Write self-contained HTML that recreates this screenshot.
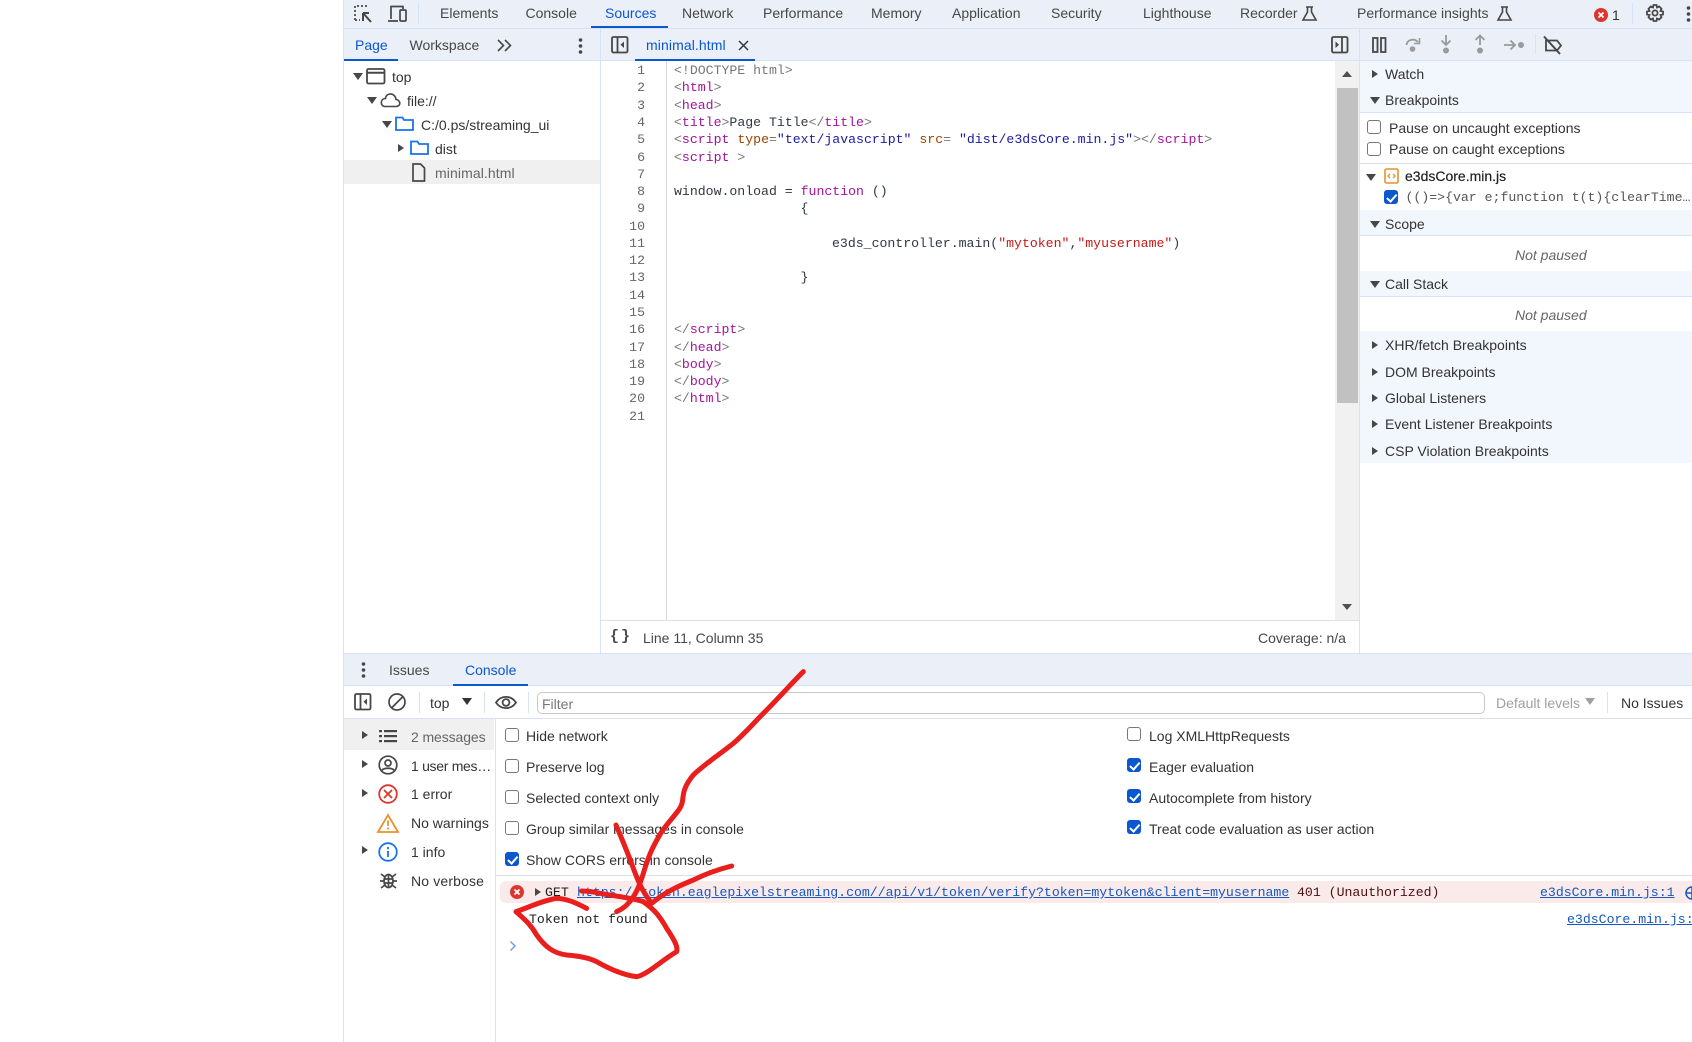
<!DOCTYPE html>
<html><head><meta charset="utf-8"><style>
html,body{margin:0;padding:0;background:#fff;width:1692px;height:1042px;overflow:hidden}
body{position:relative;font:14px/20px "Liberation Sans",sans-serif;color:#474747}
.t,.m,.b,svg,.c{position:absolute}
.t,.m{white-space:pre;height:20px}
.m{font:13.2px/20px "Liberation Mono",monospace;color:#303942}
.b{display:block}
.p{color:#a3139c}.a{color:#994500}.v{color:#1a1aa6}.s{color:#c41a16}.g{color:#777}
.blue{color:#0b57d0}
.r,.d{position:absolute;width:0;height:0}
.r{border-left:6px solid #474747;border-top:4.500px solid transparent;border-bottom:4.500px solid transparent;margin-top:1px}
.d{border-top:7px solid #474747;border-left:5px solid transparent;border-right:5px solid transparent;margin-top:1px}
.c{width:12px;height:12px;border:1.500px solid #777;border-radius:3px;background:#fff}
.c.on{background:#0b57d0;border-color:#0b57d0}
.c.on:after{content:"";position:absolute;left:3.500px;top:.500px;width:3.500px;height:7.500px;border:solid #fff;border-width:0 2px 2px 0;transform:rotate(42deg)}
a{color:#1558c0;text-decoration:underline}
svg{overflow:visible}
</style></head><body>
<!-- backgrounds -->
<div class="b" style="left:344px;top:0;width:1348px;height:28px;background:#ebeff7"></div>
<div class="b" style="left:344px;top:28px;width:1348px;height:1px;background:#d6e2f7"></div>
<div class="b" style="left:344px;top:29px;width:1348px;height:31px;background:#ebeff7"></div>
<div class="b" style="left:344px;top:60px;width:1348px;height:1px;background:#d6e2f7"></div>
<div class="b" style="left:343px;top:0;width:1px;height:1042px;background:#d6e2f7"></div>
<div class="b" style="left:600px;top:29px;width:1px;height:624px;background:#d6e2f7"></div>
<div class="b" style="left:1359px;top:29px;width:1px;height:624px;background:#d6e2f7"></div>
<div class="b" style="left:666px;top:61px;width:1px;height:559px;background:#d8d8d8"></div>
<!-- active tab underlines -->
<div class="b" style="left:591px;top:26px;width:77px;height:2px;background:#0b57d0"></div>
<div class="b" style="left:344px;top:59px;width:54px;height:2px;background:#0b57d0"></div>
<div class="b" style="left:635px;top:59px;width:120px;height:2px;background:#0b57d0"></div>
<!-- main toolbar icons -->
<svg style="left:354px;top:5px" width="19" height="19" fill="none" stroke="#474747" stroke-width="1.700"><path stroke-dasharray="2 2" d="M1 15V1H15"/><path stroke-dasharray="2 2" d="M1 15H6"/><path d="M9 8V16M9 8H15M9 8L17 17" stroke-width="2"/></svg>
<svg style="left:388px;top:5px" width="20" height="18" fill="none" stroke="#474747" stroke-width="1.700"><path d="M3 14V1.500H15V4M0 16H10"/><rect x="12" y="5" width="6" height="11" rx="1"/></svg>
<div class="b" style="left:418px;top:3px;width:1px;height:21px;background:#d6e2f7"></div>
<span class="t" style="left:440px;top:3px">Elements</span>
<span class="t" style="left:525.500px;top:3px">Console</span>
<span class="t blue" style="left:605px;top:3px">Sources</span>
<span class="t" style="left:682px;top:3px">Network</span>
<span class="t" style="left:763px;top:3px">Performance</span>
<span class="t" style="left:871px;top:3px">Memory</span>
<span class="t" style="left:952px;top:3px">Application</span>
<span class="t" style="left:1051px;top:3px">Security</span>
<span class="t" style="left:1143px;top:3px">Lighthouse</span>
<span class="t" style="left:1240px;top:3px">Recorder</span>
<svg style="left:1302px;top:6px" width="15" height="15" fill="none" stroke="#474747" stroke-width="1.600"><path d="M4 1H11M5.500 1V6L1 14H14L9.500 6V1"/></svg>
<span class="t" style="left:1357px;top:3px">Performance insights</span>
<svg style="left:1497px;top:6px" width="15" height="15" fill="none" stroke="#474747" stroke-width="1.600"><path d="M4 1H11M5.500 1V6L1 14H14L9.500 6V1"/></svg>
<svg style="left:1594px;top:8px" width="14" height="14"><circle cx="7" cy="7" r="7" fill="#dc362e"/><path d="M4.500 4.500L9.500 9.500M9.500 4.500L4.500 9.500" stroke="#fff" stroke-width="1.800"/></svg>
<span class="t" style="left:1612px;top:5px;color:#333">1</span>
<div class="b" style="left:1632px;top:3px;width:1px;height:21px;background:#d6e2f7"></div>
<svg style="left:1646px;top:4px" width="18" height="18" fill="none" stroke="#474747" stroke-width="1.800"><circle cx="9" cy="9" r="2.600"/><path d="M7.500 1H10.500L11 3.500L13.200 2.500L15.500 4.800L14.500 7L17 7.500V10.500L14.500 11L15.500 13.200L13.200 15.500L11 14.500L10.500 17H7.500L7 14.500L4.800 15.500L2.500 13.200L3.500 11L1 10.500V7.500L3.500 7L2.500 4.800L4.800 2.500L7 3.500Z"/></svg>
<svg style="left:1686px;top:6px" width="5" height="17" fill="#474747"><circle cx="2.500" cy="2" r="1.800"/><circle cx="2.500" cy="8" r="1.800"/><circle cx="2.500" cy="14" r="1.800"/></svg>
<!-- left nav header -->
<span class="t blue" style="left:355px;top:35px">Page</span>
<span class="t" style="left:409.500px;top:35px">Workspace</span>
<svg style="left:497px;top:39px" width="15" height="13" fill="none" stroke="#474747" stroke-width="1.600"><path d="M1 1L6.500 6.500L1 12M8 1L13.500 6.500L8 12"/></svg>
<svg style="left:578px;top:38px" width="5" height="16" fill="#474747"><circle cx="2.500" cy="2" r="1.800"/><circle cx="2.500" cy="8" r="1.800"/><circle cx="2.500" cy="14" r="1.800"/></svg>
<svg style="left:611px;top:36px" width="18" height="18" fill="none" stroke="#474747" stroke-width="1.800"><rect x="1" y="1" width="15.500" height="15.500" rx="1.500"/><path d="M6.500 1V16.500"/><path d="M13 5.500L9.500 8.800L13 12Z" fill="#474747" stroke="none"/></svg>
<span class="t blue" style="left:646px;top:35px;letter-spacing:.1px">minimal.html</span>
<svg style="left:739px;top:41px" width="9" height="9" stroke="#303942" stroke-width="1.500"><path d="M0 0L9 9M9 0L0 9"/></svg>
<svg style="left:1331px;top:36px" width="18" height="18" fill="none" stroke="#474747" stroke-width="1.800"><rect x="1" y="1" width="15.500" height="15.500" rx="1.500"/><path d="M11 1V16.500"/><path d="M4.500 5.500L8 8.800L4.500 12Z" fill="#474747" stroke="none"/></svg>
<!-- debugger toolbar -->
<svg style="left:1372px;top:37px" width="15" height="16" fill="none" stroke="#474747" stroke-width="1.800"><rect x="1" y="1" width="4.500" height="14"/><rect x="9" y="1" width="4.500" height="14"/></svg>
<svg style="left:1405px;top:36px" width="16" height="18" fill="none" stroke="#9a9a9a" stroke-width="1.800"><path d="M1.500 9C2 3.500 9 2 13 6"/><path d="M14.500 2V7.500H9" stroke-width="1.600"/><circle cx="7.500" cy="13" r="2.800" fill="#9a9a9a" stroke="none"/></svg>
<svg style="left:1439px;top:34px" width="14" height="20" fill="none" stroke="#9a9a9a" stroke-width="1.800"><path d="M7 1V11M2.500 6.500L7 11L11.500 6.500"/><circle cx="7" cy="16.500" r="3" fill="#9a9a9a" stroke="none"/></svg>
<svg style="left:1473px;top:34px" width="14" height="20" fill="none" stroke="#9a9a9a" stroke-width="1.800"><path d="M7 11V1.500M2.500 6L7 1.500L11.500 6"/><circle cx="7" cy="16.500" r="3" fill="#9a9a9a" stroke="none"/></svg>
<svg style="left:1504px;top:39px" width="21" height="12" fill="none" stroke="#9a9a9a" stroke-width="1.800"><path d="M0 6H11M6.500 1.500L11 6L6.500 10.500"/><circle cx="17" cy="6" r="3" fill="#9a9a9a" stroke="none"/></svg>
<div class="b" style="left:1535px;top:34px;width:1px;height:20px;background:#d6e2f7"></div>
<svg style="left:1543px;top:36px" width="20" height="19" fill="none" stroke="#474747" stroke-width="1.800"><path d="M3 4.500H14L18 9.500L14 14.500H3Z"/><path d="M1 0.500L17 18" stroke-width="2"/></svg>
<!-- file tree -->
<div class="d" style="left:352.500px;top:72px"></div>
<svg style="left:366px;top:68px" width="20" height="17" fill="none" stroke="#474747" stroke-width="1.800"><rect x="1" y="1" width="17.500" height="14.500" rx="1.500"/><path d="M1 4.800H18.500" stroke-width="2"/></svg>
<span class="t" style="left:392px;top:67px;color:#333">top</span>
<div class="d" style="left:367px;top:96px"></div>
<svg style="left:380px;top:92px" width="21" height="16" fill="none" stroke="#474747" stroke-width="1.600"><path d="M5 14.500H16C22 14 20 7.500 16 7.500C15 0 6 0.500 5.500 6.500C0 6.500 0 14.500 5 14.500Z"/></svg>
<span class="t" style="left:407px;top:91px;color:#333">file://</span>
<div class="d" style="left:382px;top:120px"></div>
<svg style="left:395px;top:116px" width="19" height="15" fill="none" stroke="#1a73e8" stroke-width="1.800"><path d="M1 3V14H18V4H9L7.500 1.500H1Z"/></svg>
<span class="t" style="left:421px;top:115px;color:#333">C:/0.ps/streaming_ui</span>
<div class="r" style="left:398px;top:143px"></div>
<svg style="left:410px;top:140px" width="19" height="15" fill="none" stroke="#1a73e8" stroke-width="1.800"><path d="M1 3V14H18V4H9L7.500 1.500H1Z"/></svg>
<span class="t" style="left:435px;top:139px;color:#333">dist</span>
<div class="b" style="left:344px;top:160px;width:256px;height:24px;background:#f0f0f0"></div>
<svg style="left:411px;top:163px" width="15" height="19" fill="none" stroke="#474747" stroke-width="1.700"><path d="M2 1H9.500L13.500 5V18H2Z"/></svg>
<span class="t" style="left:435px;top:163px;color:#666;letter-spacing:.1px">minimal.html</span>
<!-- gutter and code -->
<style>.n{position:absolute;left:600px;width:45px;text-align:right;font:13.2px/20px "Liberation Mono",monospace;color:#666;height:20px}</style>
<span class="n" style="top:61px">1</span><span class="n" style="top:78.400px">2</span><span class="n" style="top:95.600px">3</span><span class="n" style="top:112.900px">4</span><span class="n" style="top:130.200px">5</span><span class="n" style="top:147.500px">6</span><span class="n" style="top:164.700px">7</span><span class="n" style="top:182px">8</span><span class="n" style="top:199.300px">9</span><span class="n" style="top:216.600px">10</span><span class="n" style="top:233.800px">11</span><span class="n" style="top:251.100px">12</span><span class="n" style="top:268.400px">13</span><span class="n" style="top:285.600px">14</span><span class="n" style="top:302.900px">15</span><span class="n" style="top:320.200px">16</span><span class="n" style="top:337.500px">17</span><span class="n" style="top:354.700px">18</span><span class="n" style="top:372px">19</span><span class="n" style="top:389.300px">20</span><span class="n" style="top:406.600px">21</span>
<span class="m g" style="left:674px;top:61px">&lt;!DOCTYPE html&gt;</span>
<span class="m g" style="left:674px;top:78.400px">&lt;<span class="p">html</span>&gt;</span>
<span class="m g" style="left:674px;top:95.600px">&lt;<span class="p">head</span>&gt;</span>
<span class="m g" style="left:674px;top:112.900px">&lt;<span class="p">title</span>&gt;<span style="color:#303942">Page Title</span>&lt;/<span class="p">title</span>&gt;</span>
<span class="m g" style="left:674px;top:130.200px">&lt;<span class="p">script</span> <span class="a">type</span>=<span class="v">"text/javascript"</span> <span class="a">src</span>= <span class="v">"dist/e3dsCore.min.js"</span>&gt;&lt;/<span class="p">script</span>&gt;</span>
<span class="m g" style="left:674px;top:147.500px">&lt;<span class="p">script</span> &gt;</span>
<span class="m" style="left:674px;top:182px">window.onload = <span class="p">function</span> ()</span>
<span class="m" style="left:800.500px;top:199.300px">{</span>
<span class="m" style="left:832px;top:233.800px">e3ds_controller.main(<span class="s">"mytoken"</span>,<span class="s">"myusername"</span>)</span>
<span class="m" style="left:800.500px;top:268.400px">}</span>
<span class="m g" style="left:674px;top:320.200px">&lt;/<span class="p">script</span>&gt;</span>
<span class="m g" style="left:674px;top:337.500px">&lt;/<span class="p">head</span>&gt;</span>
<span class="m g" style="left:674px;top:354.700px">&lt;<span class="p">body</span>&gt;</span>
<span class="m g" style="left:674px;top:372px">&lt;/<span class="p">body</span>&gt;</span>
<span class="m g" style="left:674px;top:389.300px">&lt;/<span class="p">html</span>&gt;</span>
<!-- scrollbar -->
<div class="b" style="left:1335px;top:61px;width:24px;height:559px;background:#f1f1f1"></div>
<div class="b" style="left:1337px;top:88px;width:21px;height:315px;background:#c1c1c1"></div>
<div style="position:absolute;left:1342px;top:71px;border-bottom:6px solid #505050;border-left:5.500px solid transparent;border-right:5.500px solid transparent"></div>
<div style="position:absolute;left:1342px;top:604px;border-top:6px solid #505050;border-left:5.500px solid transparent;border-right:5.500px solid transparent"></div>
<!-- status bar -->
<div class="b" style="left:601px;top:620px;width:758px;height:1px;background:#d6e2f7"></div>
<span class="t" style="left:610px;top:627px;font:bold 15px/20px 'Liberation Mono',monospace;color:#474747;letter-spacing:2px">{}</span>
<span class="t" style="left:643px;top:628px">Line 11, Column 35</span>
<span class="t" style="left:1258px;top:628px">Coverage: n/a</span>
<!-- right sidebar -->
<div class="b" style="left:1360px;top:61px;width:332px;height:51px;background:#f2f6fd"></div>
<div class="b" style="left:1360px;top:112px;width:332px;height:1px;background:#d6e2f7"></div>
<div class="b" style="left:1360px;top:163px;width:332px;height:1px;background:#d6e2f7"></div>
<div class="b" style="left:1360px;top:210px;width:332px;height:25px;background:#f2f6fd;border-bottom:1px solid #d6e2f7"></div>
<div class="b" style="left:1360px;top:271px;width:332px;height:25px;background:#f2f6fd;border-bottom:1px solid #d6e2f7"></div>
<div class="b" style="left:1360px;top:331px;width:332px;height:132px;background:#f2f6fd"></div>
<div class="r" style="left:1372px;top:69px"></div><span class="t" style="left:1385px;top:64px;color:#333">Watch</span>
<div class="d" style="left:1370px;top:96px"></div><span class="t" style="left:1385px;top:90px;color:#333">Breakpoints</span>
<div class="c" style="left:1367px;top:120px"></div><span class="t" style="left:1389px;top:118px;color:#333">Pause on uncaught exceptions</span>
<div class="c" style="left:1367px;top:142px"></div><span class="t" style="left:1389px;top:139px;color:#333">Pause on caught exceptions</span>
<div class="d" style="left:1366px;top:173px"></div>
<svg style="left:1384px;top:168px" width="15" height="16" fill="none"><rect x="1" y="1" width="13" height="14" rx="1.500" stroke="#e8912d" stroke-width="1.600"/><path d="M6 6L4 8L6 10M9 6L11 8L9 10" stroke="#e8912d" stroke-width="1.300"/></svg>
<span class="t" style="left:1405px;top:166px;color:#1f1f1f;-webkit-text-stroke:.2px #1f1f1f">e3dsCore.min.js</span>
<div class="c on" style="left:1384px;top:190px"></div>
<span class="m" style="left:1405.500px;top:188px;color:#555">(()=&gt;{var e;function t(t){clearTime…</span>
<div class="d" style="left:1370px;top:220px"></div><span class="t" style="left:1385px;top:214px;color:#333">Scope</span>
<span class="t" style="left:1515px;top:245px;font-style:italic;color:#666">Not paused</span>
<div class="d" style="left:1370px;top:280px"></div><span class="t" style="left:1385px;top:274px;color:#333">Call Stack</span>
<span class="t" style="left:1515px;top:305px;font-style:italic;color:#666">Not paused</span>
<div class="r" style="left:1372px;top:340px"></div><span class="t" style="left:1385px;top:335px;color:#333">XHR/fetch Breakpoints</span>
<div class="r" style="left:1372px;top:367px"></div><span class="t" style="left:1385px;top:362px;color:#333">DOM Breakpoints</span>
<div class="r" style="left:1372px;top:393px"></div><span class="t" style="left:1385px;top:388px;color:#333">Global Listeners</span>
<div class="r" style="left:1372px;top:419px"></div><span class="t" style="left:1385px;top:414px;color:#333">Event Listener Breakpoints</span>
<div class="r" style="left:1372px;top:446px"></div><span class="t" style="left:1385px;top:441px;color:#333">CSP Violation Breakpoints</span>
<!-- drawer -->
<div class="b" style="left:344px;top:653px;width:1348px;height:33px;background:#ebeff7;border-top:1px solid #d6e2f7;border-bottom:1px solid #d6e2f7;box-sizing:border-box"></div>
<svg style="left:360.500px;top:662px" width="5" height="16" fill="#474747"><circle cx="2.500" cy="2" r="1.800"/><circle cx="2.500" cy="8" r="1.800"/><circle cx="2.500" cy="14" r="1.800"/></svg>
<span class="t" style="left:389px;top:660px">Issues</span>
<span class="t blue" style="left:465px;top:660px">Console</span>
<div class="b" style="left:453px;top:684px;width:75px;height:2px;background:#0b57d0"></div>
<div class="b" style="left:344px;top:718px;width:1348px;height:1px;background:#d6e2f7"></div>
<svg style="left:354px;top:693px" width="18" height="18" fill="none" stroke="#474747" stroke-width="1.800"><rect x="1" y="1" width="15.500" height="15.500" rx="1.500"/><path d="M6.500 1V16.500"/><path d="M13 5.500L9.500 8.800L13 12Z" fill="#474747" stroke="none"/></svg>
<svg style="left:388px;top:693px" width="18" height="18" fill="none" stroke="#474747" stroke-width="1.700"><circle cx="9" cy="9" r="8"/><path d="M3.500 15L15 3.500"/></svg>
<div class="b" style="left:418.500px;top:692px;width:1px;height:21px;background:#d6e2f7"></div>
<span class="t" style="left:430px;top:693px;color:#333">top</span>
<div class="d" style="left:461.500px;top:697px;border-top-color:#333"></div>
<div class="b" style="left:483.500px;top:692px;width:1px;height:21px;background:#d6e2f7"></div>
<svg style="left:495px;top:695px" width="22" height="15" fill="none" stroke="#474747" stroke-width="1.800"><path d="M1 7.500C6 0 16 0 21 7.500C16 15 6 15 1 7.500Z"/><circle cx="11" cy="7.500" r="3.400"/></svg>
<div class="b" style="left:528px;top:692px;width:1px;height:21px;background:#d6e2f7"></div>
<div class="b" style="left:537px;top:692px;width:946px;height:20px;border:1.200px solid #c8c8c8;border-radius:5px;box-sizing:content-box"></div>
<span class="t" style="left:542px;top:694px;color:#777">Filter</span>
<span class="t" style="left:1496px;top:693px;color:#a0a0a0">Default levels</span>
<div class="d" style="left:1585px;top:697px;border-top-color:#a0a0a0"></div>
<div class="b" style="left:1607px;top:692px;width:1px;height:21px;background:#d6e2f7"></div>
<span class="t" style="left:1621px;top:693px;color:#333">No Issues</span>
<!-- console sidebar -->
<div class="b" style="left:344px;top:719px;width:150px;height:31px;background:#f0f0f0"></div>
<div class="b" style="left:494.500px;top:719px;width:1px;height:323px;background:#d6e2f7"></div>
<div class="r" style="left:362px;top:730px"></div>
<svg style="left:379px;top:730px" width="18" height="13" fill="#474747"><rect x="0" y="0" width="3" height="2.200"/><rect x="5" y="0" width="13" height="2.200"/><rect x="0" y="5" width="3" height="2.200"/><rect x="5" y="5" width="13" height="2.200"/><rect x="0" y="10" width="3" height="2.200"/><rect x="5" y="10" width="13" height="2.200"/></svg>
<span class="t" style="left:411px;top:727px;color:#666;letter-spacing:-.1px">2 messages</span>
<div class="r" style="left:362px;top:759px"></div>
<svg style="left:378px;top:755px" width="20" height="20" fill="none" stroke="#474747" stroke-width="1.700"><circle cx="10" cy="10" r="8.800"/><circle cx="10" cy="8" r="3"/><path d="M3.500 15.500C6 12.500 14 12.500 16.500 15.500"/></svg>
<span class="t" style="left:411px;top:756px;color:#333;letter-spacing:-.3px">1 user mes…</span>
<div class="r" style="left:362px;top:788px"></div>
<svg style="left:378px;top:784px" width="20" height="20" fill="none" stroke="#dc362e" stroke-width="1.800"><circle cx="10" cy="10" r="8.800"/><path d="M6 6L14 14M14 6L6 14"/></svg>
<span class="t" style="left:411px;top:784px;color:#333">1 error</span>
<svg style="left:377px;top:813px" width="22" height="20" fill="none" stroke="#e8912d" stroke-width="1.800"><path d="M11 2L21 19H1Z"/><path d="M11 7.500V13M11 14.500V16.500"/></svg>
<span class="t" style="left:411px;top:813px;color:#333">No warnings</span>
<div class="r" style="left:362px;top:845px"></div>
<svg style="left:378px;top:842px" width="20" height="20" fill="none" stroke="#1a73e8" stroke-width="1.800"><circle cx="10" cy="10" r="8.800"/><path d="M10 9V15M10 5V7.200"/></svg>
<span class="t" style="left:411px;top:842px;color:#333">1 info</span>
<svg style="left:380px;top:871px" width="17" height="18" fill="none" stroke="#474747" stroke-width="1.700"><ellipse cx="8.500" cy="10" rx="4.500" ry="6.500"/><path d="M8.500 4V16M4 8H13M4 12H13M1 3L5 6M16 3L12 6M0 10H4M13 10H17M1 17L5 14M16 17L12 14"/></svg>
<span class="t" style="left:411px;top:871px;color:#333;letter-spacing:.15px">No verbose</span>
<!-- settings -->
<div class="c" style="left:505px;top:728px"></div><span class="t" style="left:526px;top:726px;color:#333">Hide network</span>
<div class="c" style="left:505px;top:759px"></div><span class="t" style="left:526px;top:757px;color:#333">Preserve log</span>
<div class="c" style="left:505px;top:790px"></div><span class="t" style="left:526px;top:788px;color:#333">Selected context only</span>
<div class="c" style="left:505px;top:821px"></div><span class="t" style="left:526px;top:819px;color:#333">Group similar messages in console</span>
<div class="c on" style="left:505px;top:852px"></div><span class="t" style="left:526px;top:850px;color:#333">Show CORS errors in console</span>
<div class="c" style="left:1127px;top:727px"></div><span class="t" style="left:1149px;top:726px;color:#333">Log XMLHttpRequests</span>
<div class="c on" style="left:1127px;top:758px"></div><span class="t" style="left:1149px;top:757px;color:#333">Eager evaluation</span>
<div class="c on" style="left:1127px;top:789px"></div><span class="t" style="left:1149px;top:788px;color:#333">Autocomplete from history</span>
<div class="c on" style="left:1127px;top:820px"></div><span class="t" style="left:1149px;top:819px;color:#333">Treat code evaluation as user action</span>
<div class="b" style="left:495px;top:875px;width:1197px;height:1px;background:#d6e2f7"></div>
<!-- console messages -->
<div class="b" style="left:500px;top:881px;width:1192px;height:22px;background:#fbeaea;border-radius:6px 0 0 6px"></div>
<svg style="left:509.500px;top:885px" width="14" height="14"><circle cx="7" cy="7" r="7" fill="#dc362e"/><path d="M4.500 4.500L9.500 9.500M9.500 4.500L4.500 9.500" stroke="#fff" stroke-width="1.800"/></svg>
<div class="r" style="left:534.500px;top:887px"></div>
<span class="m" style="left:545px;top:883px;color:#1f1f1f">GET</span>
<span class="m" style="left:577px;top:883px"><a>https://token.eaglepixelstreaming.com//api/v1/token/verify?token=mytoken&amp;client=myusername</a></span>
<span class="m" style="left:1297px;top:883px;color:#4a1010">401 (Unauthorized)</span>
<span class="m" style="left:1540px;top:883px"><a>e3dsCore.min.js:1</a></span>
<svg style="left:1685px;top:886px" width="14" height="14" fill="none" stroke="#1558c0" stroke-width="1.500"><circle cx="7" cy="7" r="6"/><path d="M7 1V13M1 7H13"/></svg>
<span class="m" style="left:529px;top:910px;color:#1f1f1f">Token not found</span>
<span class="m" style="left:1567px;top:910px"><a>e3dsCore.min.js:</a></span>
<svg style="left:509px;top:940px" width="8" height="12" fill="none" stroke="#6f9fe8" stroke-width="1.500"><path d="M1.500 1.500L6 6L1.500 10.500"/></svg>
<!-- red annotation -->
<svg style="left:0;top:0;pointer-events:none" width="1692" height="1042" viewBox="0 0 1692 1042"><g transform="translate(480 660) scale(.33333)" fill="none" stroke="#e81f1c" stroke-width="15" stroke-linecap="round" stroke-linejoin="round"><path d="M970 35C930 75 900 110 860 150S790 225 760 250S670 315 640 345C615 375 610 395 608 420C605 450 580 465 545 515C515 565 505 590 490 640C475 690 460 715 440 735C430 745 420 750 410 755"/><path d="M408 495C425 535 440 570 460 625S495 705 515 730C550 700 590 680 640 660C680 640 715 628 755 618"/><path d="M320 745C290 730 260 715 230 715C195 720 150 740 108 755C130 775 150 790 170 825C195 860 220 880 260 885C300 888 330 895 350 905C385 925 430 945 470 950C500 945 540 905 590 875C595 860 580 835 560 805C540 770 525 750 490 725C450 712 400 708 360 700C340 695 325 693 305 693"/></g></svg>
</body></html>
